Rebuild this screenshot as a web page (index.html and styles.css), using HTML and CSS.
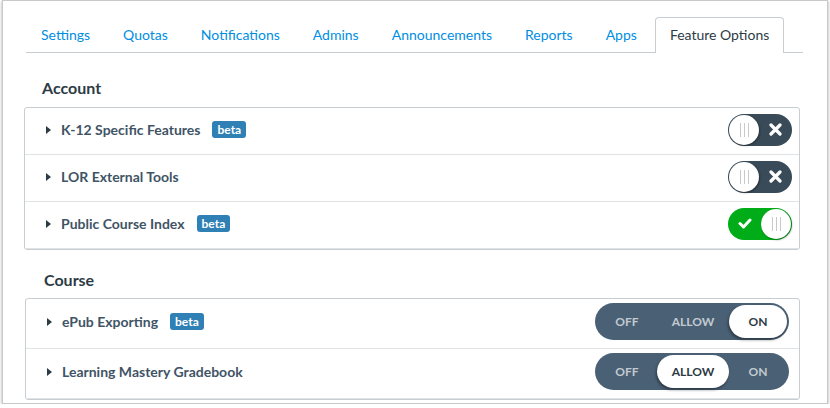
FILE: index.html
```html
<!DOCTYPE html>
<html lang="en">
<head>
  <meta charset="UTF-8" />
  <title>Feature Options</title>
  <link rel="stylesheet" href="styles.css">
</head>
<body>
  <div class="window">
    <ul class="tabs">
      <li><a href="#">Settings</a></li>
      <li><a href="#">Quotas</a></li>
      <li><a href="#">Notifications</a></li>
      <li><a href="#">Admins</a></li>
      <li><a href="#">Announcements</a></li>
      <li><a href="#">Reports</a></li>
      <li><a href="#">Apps</a></li>
      <li class="active"><a href="#">Feature Options</a></li>
    </ul>

    <h3 class="section-title">Account</h3>
    <div class="panel account">
      <div class="row">
        <div class="label">
          <svg class="caret" width="5" height="8" viewBox="0 0 5 8"><path d="M0 0L5 4L0 8Z"/></svg>
          <span>K-12 Specific Features</span>
          <span class="beta">beta</span>
        </div>
        <div class="switch off">
          <span class="knob"><i></i><i></i><i></i></span>
          <span class="mark">
            <svg width="13" height="13" viewBox="0 0 13 13"><path d="M2 2L11 11M11 2L2 11" stroke="#fff" stroke-width="3.2" stroke-linecap="round"/></svg>
          </span>
        </div>
      </div>
      <div class="row">
        <div class="label">
          <svg class="caret" width="5" height="8" viewBox="0 0 5 8"><path d="M0 0L5 4L0 8Z"/></svg>
          <span>LOR External Tools</span>
        </div>
        <div class="switch off">
          <span class="knob"><i></i><i></i><i></i></span>
          <span class="mark">
            <svg width="13" height="13" viewBox="0 0 13 13"><path d="M2 2L11 11M11 2L2 11" stroke="#fff" stroke-width="3.2" stroke-linecap="round"/></svg>
          </span>
        </div>
      </div>
      <div class="row">
        <div class="label">
          <svg class="caret" width="5" height="8" viewBox="0 0 5 8"><path d="M0 0L5 4L0 8Z"/></svg>
          <span>Public Course Index</span>
          <span class="beta">beta</span>
        </div>
        <div class="switch on">
          <span class="knob"><i></i><i></i><i></i></span>
          <span class="mark">
            <svg width="14" height="11" viewBox="0 0 14 11"><path d="M2 5.5L5.5 9L12 2" fill="none" stroke="#fff" stroke-width="3" stroke-linecap="round" stroke-linejoin="round"/></svg>
          </span>
        </div>
      </div>
    </div>

    <h3 class="section-title">Course</h3>
    <div class="panel course">
      <div class="row">
        <div class="label">
          <svg class="caret" width="5" height="8" viewBox="0 0 5 8"><path d="M0 0L5 4L0 8Z"/></svg>
          <span>ePub Exporting</span>
          <span class="beta">beta</span>
        </div>
        <div class="tri">
          <span>OFF</span>
          <span>ALLOW</span>
          <span class="current">ON</span>
        </div>
      </div>
      <div class="row">
        <div class="label">
          <svg class="caret" width="5" height="8" viewBox="0 0 5 8"><path d="M0 0L5 4L0 8Z"/></svg>
          <span>Learning Mastery Gradebook</span>
        </div>
        <div class="tri">
          <span>OFF</span>
          <span class="current">ALLOW</span>
          <span>ON</span>
        </div>
      </div>
    </div>
  </div>
</body>
</html>
```

FILE: styles.css
```css
body {
  margin: 0;
  font-family: Lato, "Open Sans", sans-serif;
  background: #ffffff;
  color: #2d3b45;
}
.window {
  margin: 0 2px;
  height: 404px;
  border: 1px solid #c9c9c9;
  box-shadow: 0 1px 3px rgba(0, 0, 0, 0.35);
  padding: 16px 27px 0 21px;
  overflow: hidden;
  box-sizing: border-box;
}
.tabs {
  list-style: none;
  margin: 0 -3px 0 2px;
  padding: 0;
  display: flex;
  gap: 3px;
  border-bottom: 1px solid #c7cdd1;
}
.tabs li {
  margin-bottom: -1px;
}
.tabs a {
  display: block;
  height: 36px;
  line-height: 34px;
  padding: 0 14px;
  font-size: 14px;
  color: #008ee2;
  text-decoration: none;
  border: 1px solid transparent;
  border-bottom: none;
  border-radius: 4px 4px 0 0;
  box-sizing: border-box;
}
.tabs .active a {
  color: #2d3b45;
  background: #fff;
  border-color: #c7cdd1;
}
.section-title {
  margin: 25px 0 9px 18px;
  font-size: 16px;
  line-height: 20px;
  font-weight: bold;
  color: #2d3b45;
}
.panel {
  border: 1px solid #c7cdd1;
  border-radius: 3px;
}
.panel.course {
  margin-left: 1px;
}
.panel + .section-title {
  margin-top: 20px;
  margin-left: 20px;
  margin-bottom: 8px;
}
.row {
  display: flex;
  align-items: center;
  justify-content: space-between;
  height: 47px;
  padding: 0 7px 3px 21px;
  border-bottom: 1px solid #dfe3e6;
  box-sizing: border-box;
}
.course .row {
  height: 50px;
  padding-bottom: 4px;
  padding-right: 10px;
}
.label {
  display: flex;
  align-items: center;
  font-size: 14px;
  font-weight: bold;
  color: #3f5466;
}
.caret {
  fill: #2d3b45;
  margin-right: 10px;
}
.beta {
  margin-left: 12px;
  background: #2f80b4;
  color: #fff;
  font-size: 12px;
  font-weight: bold;
  line-height: 17px;
  padding: 0 5px;
  border-radius: 3px;
}
.switch {
  display: flex;
  align-items: center;
  width: 64px;
  height: 32px;
  padding: 1px;
  border-radius: 16px;
  box-sizing: border-box;
  background: #394b58;
}
.switch.on {
  background: #00ac18;
  flex-direction: row-reverse;
}
.knob {
  display: flex;
  justify-content: center;
  align-items: center;
  gap: 3px;
  width: 30px;
  height: 30px;
  border-radius: 50%;
  background: #fff;
  box-shadow: 1px 1px 2px rgba(0, 0, 0, 0.35);
}
.knob i {
  width: 1px;
  height: 14px;
  background: #c9c9c9;
}
.mark {
  flex: 1;
  display: flex;
  justify-content: center;
  align-items: center;
}
.tri {
  display: grid;
  grid-template-columns: 60px 72px 1fr;
  width: 194px;
  height: 37px;
  padding: 2px;
  border-radius: 19px;
  background: #4a6075;
  box-sizing: border-box;
}
.tri span {
  display: flex;
  justify-content: center;
  align-items: center;
  font-size: 12px;
  font-weight: bold;
  color: #c2cad0;
  border-radius: 17px;
}
.tri .current {
  background: #fff;
  color: #2d3b45;
  box-shadow: -1px 2px 3px rgba(0, 0, 0, 0.4);
}
```
